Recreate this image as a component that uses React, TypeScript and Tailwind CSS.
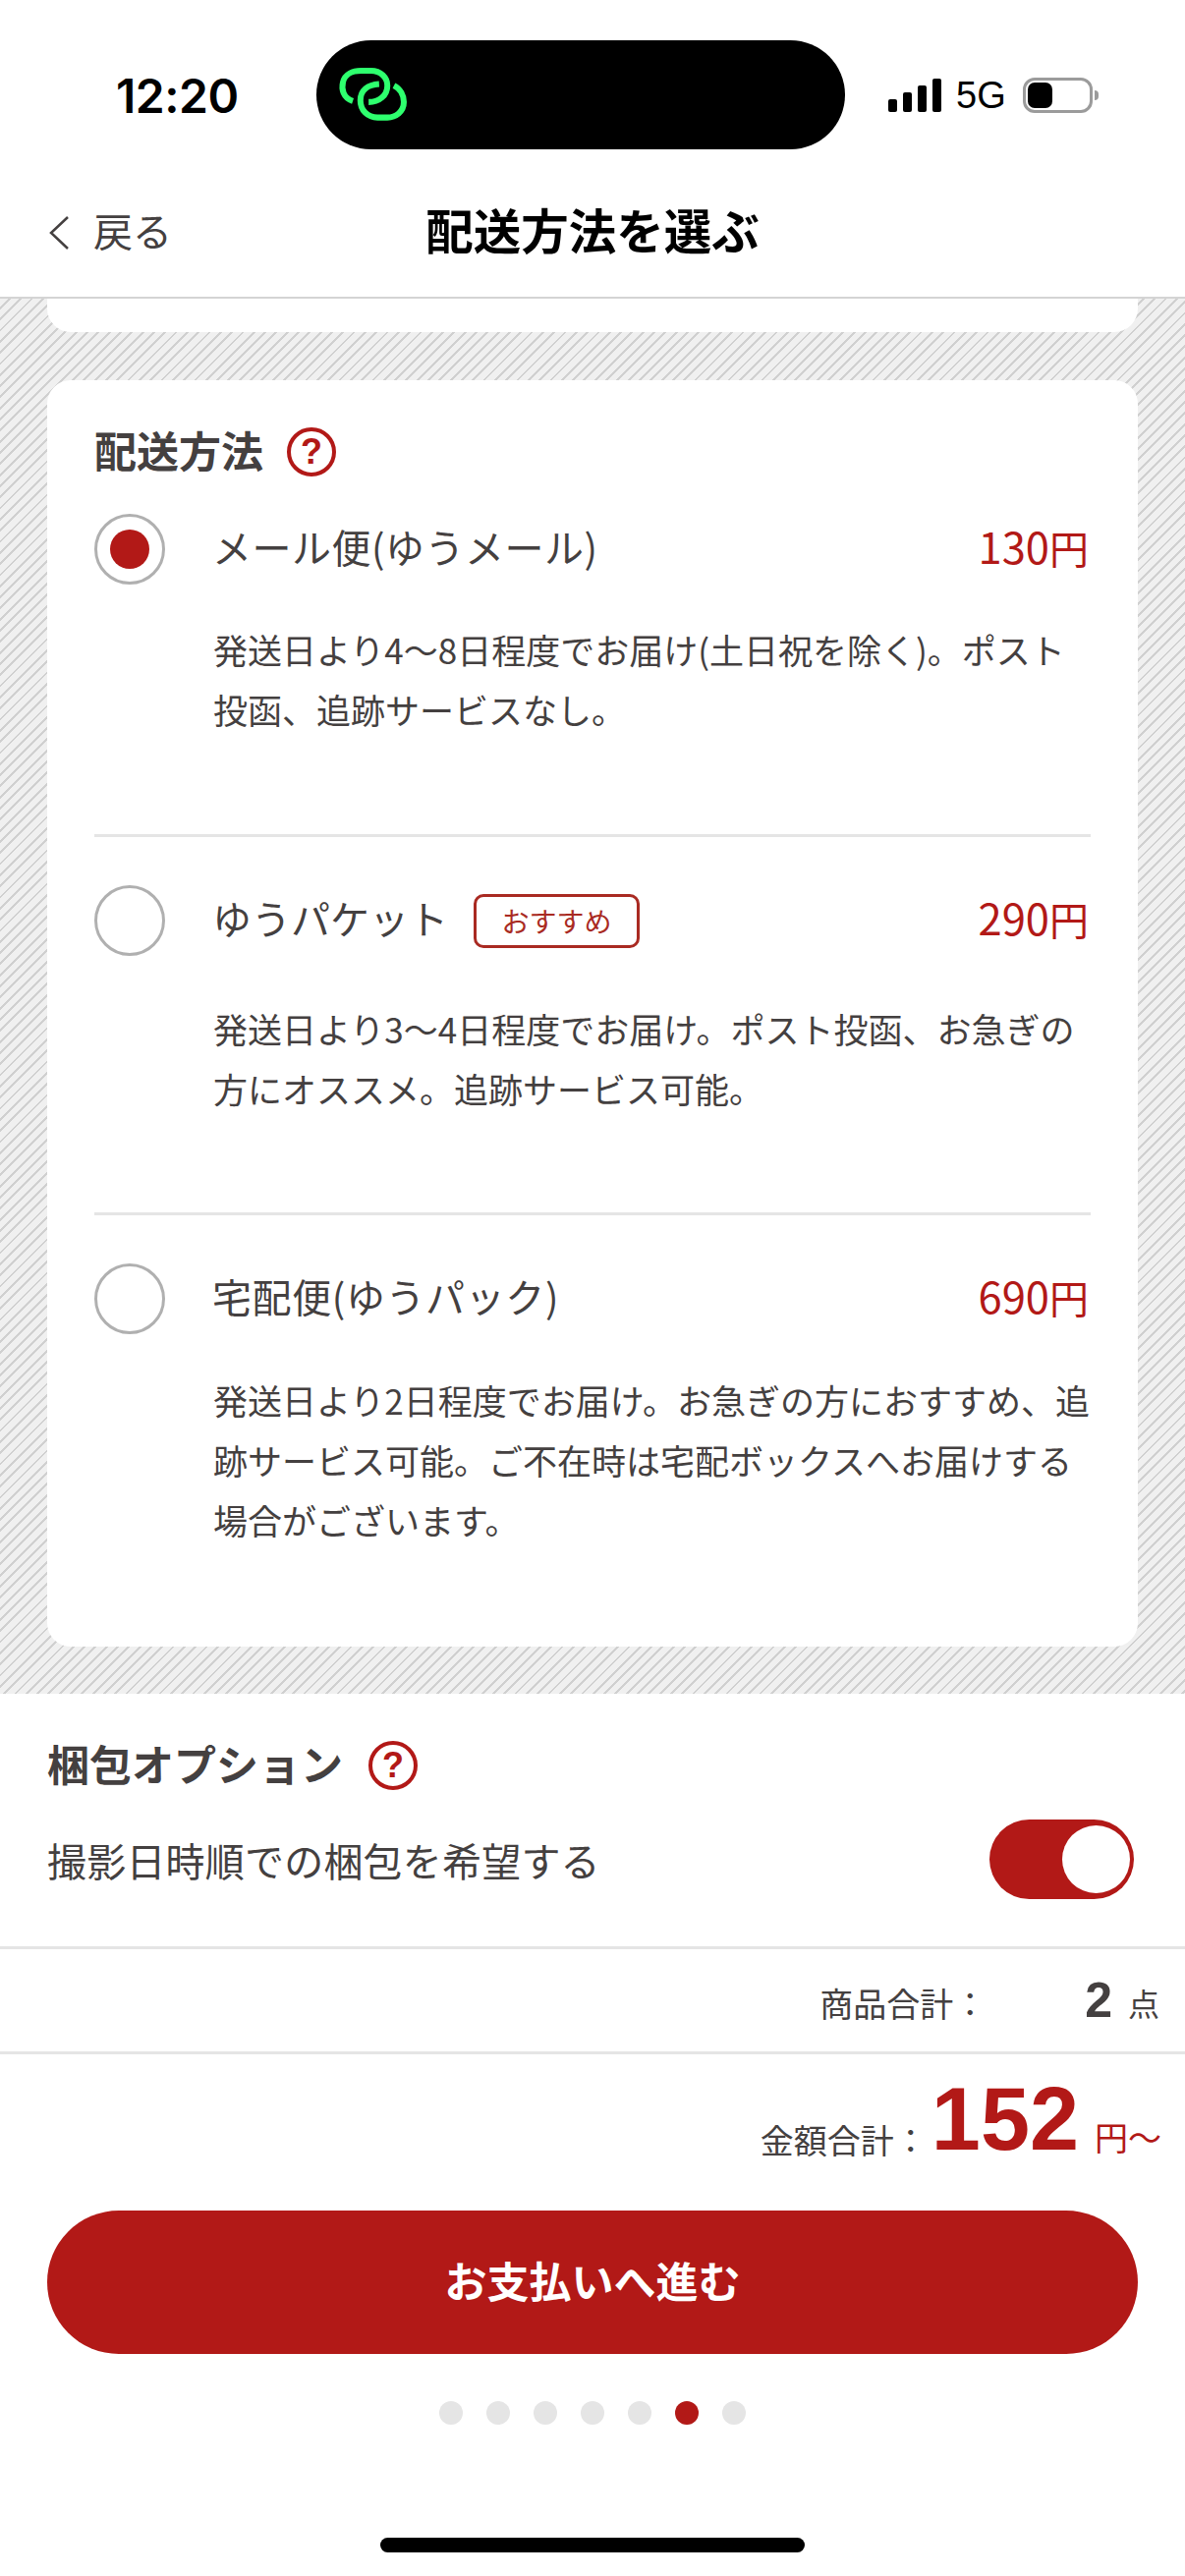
const jp = "font-['Noto_Sans_CJK_JP','Noto_Sans',sans-serif]";

const methods = [
  {
    name: "メール便(ゆうメール)",
    nameClass: "tracking-[0.5px]",
    price: "130",
    selected: true,
    lines: ["発送日より4〜8日程度でお届け(土日祝を除く)。ポスト", "投函、追跡サービスなし。"],
    rowClass: "pb-[97px] border-b-[3px] border-[#e5e5e5]",
    descClass: "mt-[35px]",
  },
  {
    name: "ゆうパケット",
    nameClass: "",
    price: "290",
    badge: "おすすめ",
    lines: ["発送日より3〜4日程度でお届け。ポスト投函、お急ぎの", "方にオススメ。追跡サービス可能。"],
    rowClass: "mt-[49px] pb-[96px] border-b-[3px] border-[#e5e5e5]",
    descClass: "mt-[43px]",
  },
  {
    name: "宅配便(ゆうパック)",
    nameClass: "tracking-[0.6px]",
    price: "690",
    lines: [
      "発送日より2日程度でお届け。お急ぎの方におすすめ、追",
      "跡サービス可能。ご不在時は宅配ボックスへお届けする",
      "場合がございます。",
    ],
    rowClass: "mt-[49px]",
    descClass: "mt-[36px]",
  },
];

function HelpIcon() {
  return (
    <span className="flex h-[50px] w-[50px] items-center justify-center rounded-full border-[4px] border-[#b21917] font-['Liberation_Sans',sans-serif] text-[36px] font-bold leading-none text-[#b21917]">
      ?
    </span>
  );
}

function ChainIcon() {
  return (
    <svg className="mb-[3px]" width="72" height="57" viewBox="135 115 215 170" fill="none" stroke="#2eff6e" strokeWidth="18" strokeLinecap="butt">
      <path d="M180 222C150 212 145 185 150 165C155 140 180 130 205 130L235 130C265 130 285 150 285 175C285 205 260 225 228 225" />
      <path d="M305 175C325 185 335 205 335 225C335 255 310 272 285 272L255 272C225 272 203 250 203 220C203 190 225 172 260 170" />
    </svg>
  );
}

function StatusBar() {
  return (
    <div className="flex h-[170px] items-start pt-[41px] font-['Inter',sans-serif] text-black">
      <div className="ml-[118px] mt-[28px] w-[204px] text-[48px] font-semibold leading-[58px] tracking-[-0.5px]">12:20</div>
      <div className="flex h-[111px] w-[538px] items-center rounded-[56px] bg-black pl-[22px]">
        <ChainIcon />
      </div>
      <div className="ml-[44px] mt-[38px] flex h-[36px] items-end">
        {/* signal bars */}
        <div className="mb-px flex items-end gap-[6px]">
          <div className="h-[13px] w-[9px] rounded-[2px] bg-black" />
          <div className="h-[20px] w-[9px] rounded-[2px] bg-black" />
          <div className="h-[27px] w-[9px] rounded-[2px] bg-black" />
          <div className="h-[34px] w-[9px] rounded-[2px] bg-black" />
        </div>
        <div className="ml-[15px] self-center font-['Liberation_Sans',sans-serif] text-[38px] leading-[36px]">5G</div>
        <div className="relative ml-[17px] h-[36px] w-[71px] rounded-[12px] border-[3px] border-[#9b9b9b] p-[2px]">
          <div className="h-[26px] w-[25px] rounded-[7px] bg-black" />
          <div className="absolute right-[-9px] top-[10px] h-[10px] w-[4px] rounded-r-full bg-[#9b9b9b]" />
        </div>
      </div>
    </div>
  );
}

function NavBar() {
  return (
    <div className="relative flex h-[134px] items-center justify-center border-b-[2px] border-[#d4d4d4]">
      <div className="absolute left-[49px] top-0 flex h-[134px] items-center gap-[24px] text-[40px] text-[#444040]">
        <svg width="22" height="34" viewBox="0 0 22 34" fill="none" stroke="#444040" strokeWidth="2.5">
          <path d="M20 1L3 17L20 33" />
        </svg>
        <span className="pb-[6px]">戻る</span>
      </div>
      <h1 className="pb-[6px] text-[48.5px] font-bold text-black">配送方法を選ぶ</h1>
    </div>
  );
}

function Radio({ selected }: { selected?: boolean }) {
  return (
    <div className="flex h-[72px] w-[72px] shrink-0 items-center justify-center rounded-full border-[3px] border-[#b0b0b0]">
      {selected && <div className="h-[40px] w-[40px] rounded-full bg-[#b21917]" />}
    </div>
  );
}

function MethodRow({ method }: { method: (typeof methods)[number] }) {
  return (
    <div className={method.rowClass}>
      <div className="flex items-start gap-[49px]">
        <Radio selected={method.selected} />
        <div className="min-w-0 flex-1">
          <div className="flex h-[72px] items-center">
            <span className={`${method.nameClass} ml-[-1px] pb-[6px] text-[40px] text-[#444040]`}>{method.name}</span>
            {method.badge && (
              <span className="ml-[26px] flex h-[55px] w-[169px] items-center justify-center rounded-[10px] border-[3px] border-[#a92a22] text-[28px] text-[#a92a22]">
                {method.badge}
              </span>
            )}
            <span className="ml-auto pb-[7px] pr-[2px] text-[40px] text-[#b21917]">
              <span className="text-[43.5px]">{method.price}</span>円
            </span>
          </div>
          <div className={`${method.descClass} text-[35px] leading-[61px] text-[#444040]`}>
            {method.lines.map((line) => (
              <div key={line} className="whitespace-nowrap">{line}</div>
            ))}
          </div>
        </div>
      </div>
    </div>
  );
}

export default function App() {
  return (
    <div className={`${jp} relative h-[2622px] w-[1206px] overflow-hidden bg-white`}>
      <StatusBar />
      <NavBar />

      {/* striped area */}
      <main className="bg-[repeating-linear-gradient(135deg,#f0f0f0_0px,#f0f0f0_6px,#d0d0d0_6px,#d0d0d0_8px)] px-[48px] pb-[48px]">
        <div className="h-[34px] rounded-b-[24px] bg-white" />
        <section className="mt-[49px] h-[1289px] rounded-[24px] bg-white px-[48px] pt-[48px]">
          <div className="flex h-[50px] items-center gap-[24px]">
            <h2 className="pb-[6px] text-[43px] font-bold text-[#444040]">配送方法</h2>
            <HelpIcon />
          </div>
          <div className="mt-[38px]">
            {methods.map((method) => (
              <MethodRow key={method.name} method={method} />
            ))}
          </div>
        </section>
      </main>

      {/* packing options */}
      <section className="h-[260px] border-b-[3px] border-[#e5e5e5] px-[48px] pt-[48px]">
        <div className="flex h-[50px] items-center gap-[26px]">
          <h2 className="pb-[6px] text-[43px] font-bold text-[#444040]">梱包オプション</h2>
          <HelpIcon />
        </div>
        <div className="mt-[30px] flex h-[81px] items-center justify-between">
          <span className="text-[40px] tracking-[0.2px] text-[#444040]">撮影日時順での梱包を希望する</span>
          <div className="mr-[4px] flex h-[81px] w-[147px] items-center justify-end rounded-full bg-[#b21917] pr-[4px]">
            <div className="h-[69px] w-[69px] rounded-full bg-white" />
          </div>
        </div>
      </section>

      <div className="flex h-[107px] items-center justify-end border-b-[3px] border-[#e5e5e5] pr-[26px] text-[#444040]">
        <span className="pt-[4px] text-[34px]">商品合計：</span>
        <span className="ml-[100px] font-['Liberation_Sans',sans-serif] text-[50px] font-bold">2</span>
        <span className="ml-[16px] pt-[4px] text-[32px]">点</span>
      </div>

      <div className="flex h-[117px] items-end justify-end pr-[24px]">
        <span className="mb-[5px] text-[34px] text-[#444040]">金額合計：</span>
        <span className="ml-[4px] font-['Liberation_Sans',sans-serif] text-[90px] font-bold leading-[102px] text-[#b21917]">152</span>
        <span className="mb-[8px] ml-[16px] text-[34px] text-[#b21917]">円〜</span>
      </div>

      <button className="mx-[48px] mt-[42px] flex h-[146px] w-[1110px] items-center justify-center rounded-full bg-[#b21917] text-[43px] font-bold text-white">
        <span className="pb-[6px]">お支払いへ進む</span>
      </button>

      <div className="mt-[48px] flex justify-center gap-[24px]">
        {[0, 1, 2, 3, 4, 5, 6].map((i) => (
          <div key={i} className={i === 5 ? "h-[24px] w-[24px] rounded-full bg-[#b21917]" : "h-[24px] w-[24px] rounded-full bg-[#e5e5e5]"} />
        ))}
      </div>

      <div className="absolute bottom-[24px] left-[387px] h-[15px] w-[432px] rounded-full bg-black" />
    </div>
  );
}
